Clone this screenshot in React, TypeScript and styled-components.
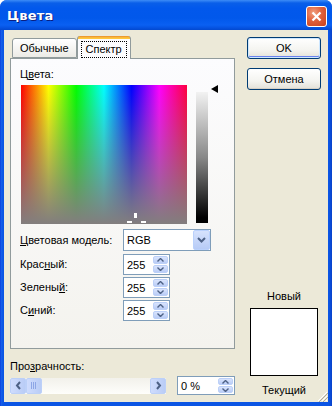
import styled, { createGlobalStyle } from "styled-components";

const GlobalStyle = createGlobalStyle`
  html, body {
    margin: 0;
    padding: 0;
    background: #ffffff;
  }
  body {
    font-family: "Liberation Sans", Arial, sans-serif;
    font-size: 11px;
    color: #000000;
  }
`;

const Window = styled.div`
  width: 332px;
  height: 406px;
  display: flex;
  flex-direction: column;
  background: linear-gradient(to right, #0831d9 0px, #1660ea 1px, #0b55e4 3px, #0b55e4 329px, #0840c8 332px);
  border-radius: 7px 7px 0 0;
  overflow: hidden;
`;

const TitleBar = styled.div`
  height: 30px;
  flex-shrink: 0;
  display: flex;
  align-items: center;
  justify-content: space-between;
  padding: 0 5px 0 7px;
  box-sizing: border-box;
  background: linear-gradient(
    to bottom,
    #3d8cf7 0px,
    #0a5fe9 3px,
    #0258ec 8px,
    #0158eb 18px,
    #0a60f2 25px,
    #0552e0 28px,
    #0349cf 30px
  );
`;

const Title = styled.span`
  font-family: "DejaVu Sans", "Liberation Sans", sans-serif;
  font-weight: bold;
  font-size: 13px;
  color: #ffffff;
  text-shadow: 1px 1px 0 #0a1e80;
  letter-spacing: 0.2px;
`;

const CloseButton = styled.div`
  width: 21px;
  height: 21px;
  margin-top: 2px;
  box-sizing: border-box;
  border: 1px solid #ffffff;
  border-radius: 3px;
  background: radial-gradient(circle at 35% 30%, #f0a080 0%, #e0603c 45%, #c8401c 100%);
  display: flex;
  align-items: center;
  justify-content: center;
`;

const Client = styled.div`
  flex: 1;
  margin: 0 4px 4px 4px;
  background: #ece9d8;
  display: flex;
  padding: 6px 7px 0 6px;
  box-sizing: border-box;
  position: relative;
`;

const LeftColumn = styled.div`
  width: 225px;
  display: flex;
  flex-direction: column;
`;

const TabStrip = styled.div`
  height: 23px;
  display: flex;
  align-items: flex-end;
  padding-left: 2px;
  margin-bottom: -1px;
  position: relative;
  z-index: 1;
`;

const Tab = styled.div<{ $active?: boolean }>`
  box-sizing: border-box;
  height: ${(p) => (p.$active ? "23px" : "20px")};
  margin-bottom: ${(p) => (p.$active ? "0" : "1px")};
  padding: ${(p) => (p.$active ? "3px 4px 0 4px" : "0 7px")};
  border: 1px solid #919b9c;
  border-bottom: ${(p) => (p.$active ? "none" : "1px solid #919b9c")};
  border-top: ${(p) => (p.$active ? "none" : "1px solid #919b9c")};
  border-radius: 3px 3px 0 0;
  background: ${(p) =>
    p.$active
      ? "linear-gradient(to bottom, #e68b2c 0px, #ffc73c 2px, #ffc73c 3px, #fcfcfe 3px)"
      : "linear-gradient(to bottom, #ffffff, #ecebe6)"};
  display: flex;
  align-items: center;
  line-height: 13px;
`;

const FocusLabel = styled.span`
  outline: 1px dotted #000000;
  outline-offset: 0;
  padding: 1px 4px 1px 4px;
`;

const Panel = styled.div`
  width: 225px;
  height: 291px;
  box-sizing: border-box;
  border: 1px solid #919b9c;
  background: linear-gradient(to bottom, #fcfcfe, #f4f3ee);
  padding: 9px 9px 0 9px;
  display: flex;
  flex-direction: column;
`;

const Label = styled.span`
  line-height: 13px;
  white-space: nowrap;
`;

const Key = styled.span`
  text-decoration: underline;
  text-underline-offset: 1px;
`;

const PickerRow = styled.div`
  display: flex;
  margin-top: 4px;
  padding-left: 1px;
`;

const Spectrum = styled.div`
  width: 174px;
  height: 139px;
  position: relative;
  overflow: hidden;
  background: linear-gradient(to bottom, rgba(130, 126, 126, 0) 0%, rgba(130, 126, 126, 1) 100%),
    linear-gradient(
      to right,
      #ff0000 0%,
      #ffff00 16.6%,
      #00ff00 33.3%,
      #00ffff 50%,
      #0000ff 66.6%,
      #ff00ff 83.3%,
      #ff0040 100%
    );
`;

const Cross = styled.div<{ $l: number; $t: number; $w: number; $h: number }>`
  position: absolute;
  left: ${(p) => p.$l}px;
  top: ${(p) => p.$t}px;
  width: ${(p) => p.$w}px;
  height: ${(p) => p.$h}px;
  background: #ffffff;
`;

const LumColumn = styled.div`
  position: relative;
  width: 31px;
  height: 139px;
  margin-left: 9px;
`;

const LumStrip = styled.div`
  position: absolute;
  left: 0;
  top: 7px;
  width: 12px;
  height: 131px;
  background: linear-gradient(to bottom, #f2f2f2 0%, #888888 50%, #000000 96%, #000000 100%);
`;

const LumMarker = styled.div`
  position: absolute;
  left: 15px;
  top: 0;
  width: 0;
  height: 0;
  border-top: 4.5px solid transparent;
  border-bottom: 4.5px solid transparent;
  border-right: 7px solid #000000;
`;

const Form = styled.div`
  display: grid;
  grid-template-columns: 103px auto;
  grid-auto-rows: auto;
  row-gap: 2px;
  align-items: center;
  margin-top: 5px;
`;

const Select = styled.div`
  width: 88px;
  height: 22px;
  box-sizing: border-box;
  border: 1px solid #7f9db9;
  background: #ffffff;
  display: flex;
  align-items: center;
  justify-content: space-between;
  padding-left: 3px;
  margin-bottom: 1px;
`;

const DropButton = styled.div`
  width: 17px;
  height: 20px;
  box-sizing: border-box;
  border: 1px solid #bad1fc;
  border-radius: 2px;
  background: linear-gradient(to bottom, #d6e2fd, #b7cbf6);
  display: flex;
  align-items: center;
  justify-content: center;
`;

const Spin = styled.div<{ $width: number; $height: number }>`
  width: ${(p) => p.$width}px;
  height: ${(p) => p.$height}px;
  box-sizing: border-box;
  border: 1px solid #7f9db9;
  background: #ffffff;
  display: flex;
  align-items: center;
  justify-content: space-between;
  padding: 1px 1px 1px 3px;
`;

const SpinButtons = styled.div`
  width: 15px;
  height: 100%;
  display: flex;
  flex-direction: column;
  gap: 1px;
`;

const SpinButton = styled.div`
  flex: 1;
  box-sizing: border-box;
  border: 1px solid #bcd0f8;
  border-radius: 2px;
  background: linear-gradient(to bottom, #d9e4fd, #b9ccf6);
  display: flex;
  align-items: center;
  justify-content: center;
`;

const Transparency = styled.div`
  display: flex;
  flex-direction: column;
  margin-top: 11px;
  gap: 3px;
`;

const SliderRow = styled.div`
  display: flex;
  align-items: center;
  gap: 11px;
`;

const ScrollBar = styled.div`
  width: 159px;
  height: 16px;
  display: flex;
  background: linear-gradient(to bottom, #f2f1eb, #fefefb);
`;

const ScrollButton = styled.div`
  width: 16px;
  height: 16px;
  box-sizing: border-box;
  border: 1px solid #bcd0f8;
  border-radius: 2px;
  background: linear-gradient(to right, #cfdcfd, #b9ccf6);
  display: flex;
  align-items: center;
  justify-content: center;
`;

const Track = styled.div`
  flex: 1;
`;

const RightColumn = styled.div`
  width: 74px;
  margin-left: 12px;
  display: flex;
  flex-direction: column;
  align-items: center;
  padding-bottom: 5px;
`;

const Button = styled.div<{ $default?: boolean }>`
  width: 74px;
  height: 22px;
  box-sizing: border-box;
  border: 1px solid #003c74;
  border-radius: 3px;
  background: linear-gradient(to bottom, #ffffff 0%, #f4f4f0 60%, #e3e1d8 100%);
  box-shadow: ${(p) =>
    p.$default ? "inset 0 0 0 1px #cee7ff, inset 0 -1px 0 1px #6982ee" : "inset 0 -1px 0 0 #d6d0c5"};
  display: flex;
  align-items: center;
  justify-content: center;
  margin-top: 1px;
  margin-bottom: 8px;
`;

const PreviewLabel = styled.span`
  line-height: 13px;
`;

const Preview = styled.div`
  width: 68px;
  height: 68px;
  box-sizing: border-box;
  border: 1px solid #000000;
  background: #ffffff;
  margin: 5px 0 8px 0;
`;

const Spacer = styled.div`
  flex: 1;
`;

const Grip = styled.svg`
  position: absolute;
  right: 0;
  bottom: 0;
`;

function UpArrow() {
  return (
    <svg width="7" height="4" viewBox="0 0 7 4">
      <path d="M0.5 3.5 L3.5 0.5 L6.5 3.5" fill="none" stroke="#4d6185" strokeWidth="1.4" />
    </svg>
  );
}

function DownArrow() {
  return (
    <svg width="7" height="4" viewBox="0 0 7 4">
      <path d="M0.5 0.5 L3.5 3.5 L6.5 0.5" fill="none" stroke="#4d6185" strokeWidth="1.4" />
    </svg>
  );
}

function Chevron() {
  return (
    <svg width="9" height="6" viewBox="0 0 9 6">
      <path d="M1 1 L4.5 4.5 L8 1" fill="none" stroke="#4d6185" strokeWidth="2" />
    </svg>
  );
}

function SideArrow({ dir }: { dir: "left" | "right" }) {
  const d = dir === "left" ? "M5 1 L2 4.5 L5 8" : "M2 1 L5 4.5 L2 8";
  return (
    <svg width="7" height="9" viewBox="0 0 7 9">
      <path d={d} fill="none" stroke="#4d6185" strokeWidth="2" />
    </svg>
  );
}

function SpinBox({ value, width, height }: { value: string; width: number; height: number }) {
  return (
    <Spin $width={width} $height={height}>
      <span>{value}</span>
      <SpinButtons>
        <SpinButton>
          <UpArrow />
        </SpinButton>
        <SpinButton>
          <DownArrow />
        </SpinButton>
      </SpinButtons>
    </Spin>
  );
}

export default function App() {
  return (
    <>
      <GlobalStyle />
      <Window>
        <TitleBar>
          <Title>Цвета</Title>
          <CloseButton>
            <svg width="11" height="11" viewBox="0 0 11 11">
              <path d="M1.5 1.5 L9.5 9.5 M9.5 1.5 L1.5 9.5" stroke="#ffffff" strokeWidth="2.2" />
            </svg>
          </CloseButton>
        </TitleBar>
        <Client>
          <LeftColumn>
            <TabStrip>
              <Tab>Обычные</Tab>
              <Tab $active>
                <FocusLabel>Спектр</FocusLabel>
              </Tab>
            </TabStrip>
            <Panel>
              <Label>
                Ц<Key>в</Key>ета:
              </Label>
              <PickerRow>
                <Spectrum>
                  <Cross $l={113} $t={128} $w={3} $h={5} />
                  <Cross $l={106} $t={136} $w={5} $h={2} />
                  <Cross $l={120} $t={136} $w={5} $h={2} />
                </Spectrum>
                <LumColumn>
                  <LumStrip />
                  <LumMarker />
                </LumColumn>
              </PickerRow>
              <Form>
                <Label>
                  <Key>Ц</Key>ветовая модель:
                </Label>
                <Select>
                  <span>RGB</span>
                  <DropButton>
                    <Chevron />
                  </DropButton>
                </Select>
                <Label>
                  Крас<Key>н</Key>ый:
                </Label>
                <SpinBox value="255" width={47} height={21} />
                <Label>
                  Зелены<Key>й</Key>:
                </Label>
                <SpinBox value="255" width={47} height={21} />
                <Label>
                  С<Key>и</Key>ний:
                </Label>
                <SpinBox value="255" width={47} height={21} />
              </Form>
            </Panel>
            <Transparency>
              <Label>
                Про<Key>з</Key>рачность:
              </Label>
              <SliderRow>
                <ScrollBar>
                  <ScrollButton>
                    <SideArrow dir="left" />
                  </ScrollButton>
                  <ScrollButton>
                    <svg width="6" height="7" viewBox="0 0 6 7">
                      <path d="M0.5 0 V7 M2.5 0 V7 M4.5 0 V7" stroke="#8da6e6" strokeWidth="1" />
                    </svg>
                  </ScrollButton>
                  <Track />
                  <ScrollButton>
                    <SideArrow dir="right" />
                  </ScrollButton>
                </ScrollBar>
                <SpinBox value="0 %" width={59} height={19} />
              </SliderRow>
            </Transparency>
          </LeftColumn>
          <RightColumn>
            <Button $default>OK</Button>
            <Button>Отмена</Button>
            <Spacer />
            <PreviewLabel>Новый</PreviewLabel>
            <Preview />
            <PreviewLabel>Текущий</PreviewLabel>
          </RightColumn>
          <Grip width="12" height="12" viewBox="0 0 12 12">
            <path d="M11 2 L2 11 M11 6 L6 11 M11 10 L10 11" stroke="#ffffff" strokeWidth="1" />
            <path d="M12 3 L3 12 M12 7 L7 12" stroke="#aca899" strokeWidth="1" />
          </Grip>
        </Client>
      </Window>
    </>
  );
}
